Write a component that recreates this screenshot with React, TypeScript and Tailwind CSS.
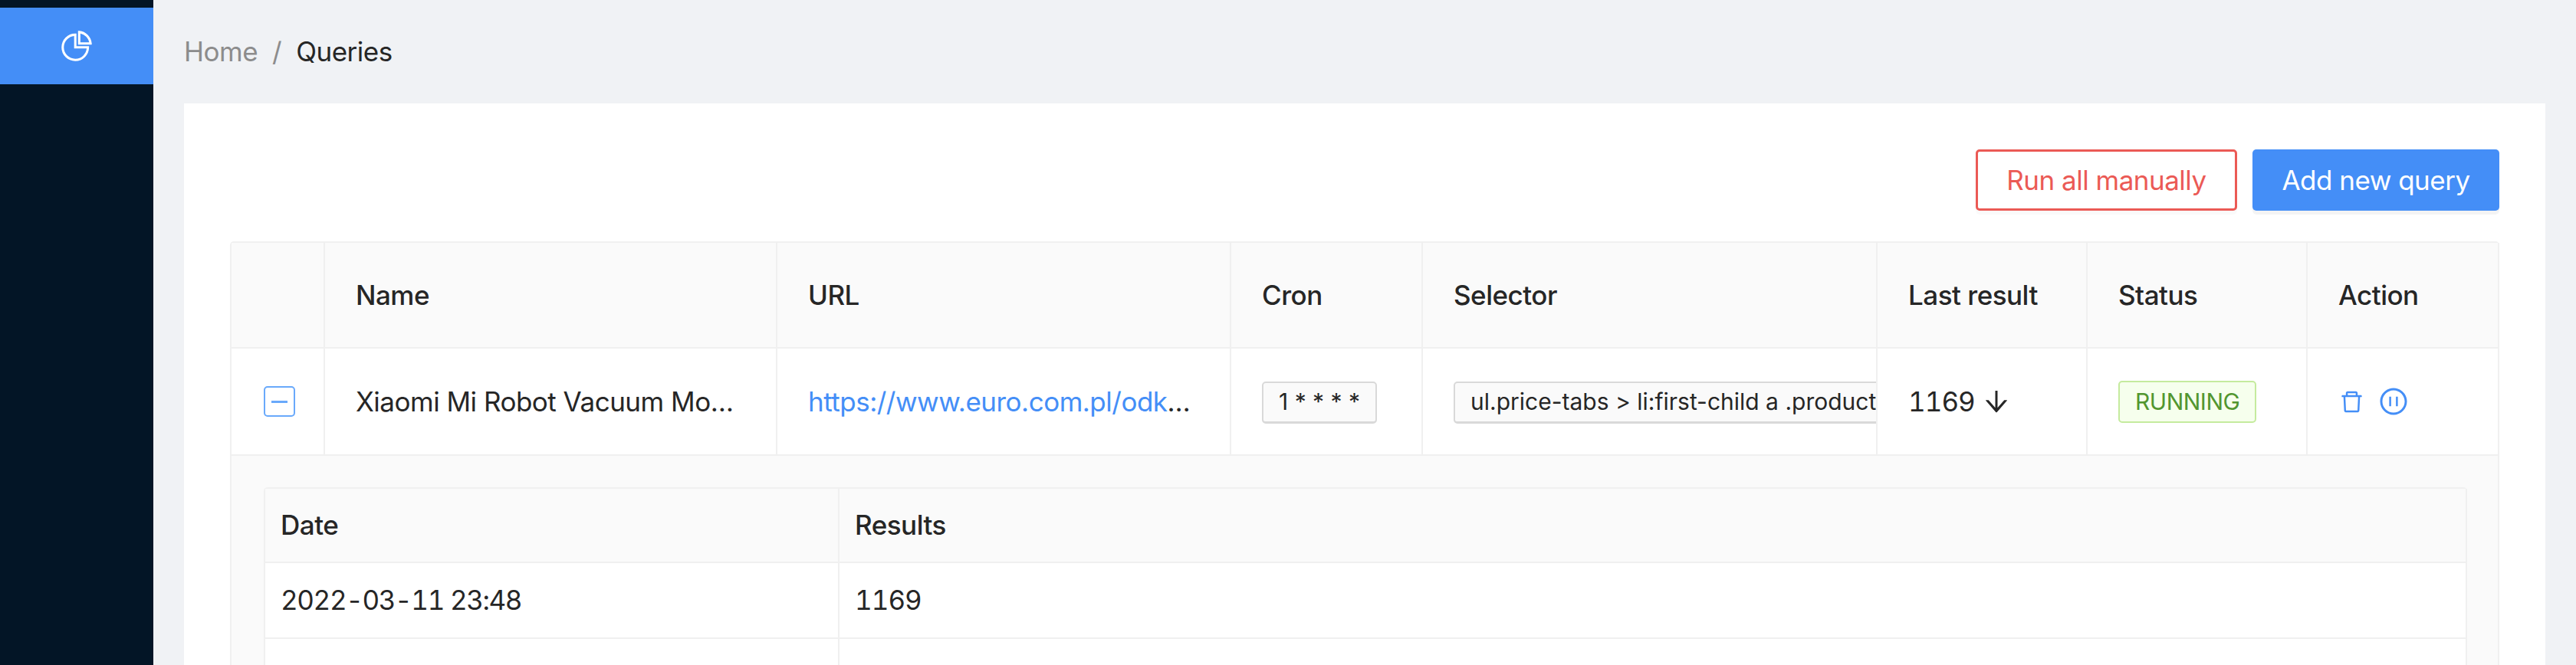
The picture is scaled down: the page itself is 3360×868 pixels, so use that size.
import { AiOutlineArrowDown, AiOutlineDelete, AiOutlinePauseCircle, AiOutlinePieChart } from 'react-icons/ai'

const headers = ['Name', 'URL', 'Cron', 'Selector', 'Last result', 'Status', 'Action']
const colWidths = ['w-[122px]', 'w-[590px]', 'w-[592px]', 'w-[250px]', 'w-[593px]', 'w-[274px]', 'w-[287px]', 'w-[250px]']

const cellBorder = 'border-r-2 border-b-2 border-[#f0f0f0]'

function Tag({ children }: { children: React.ReactNode }) {
  return (
    <span className="inline-block h-[55px] whitespace-nowrap rounded-[5px] border-2 border-b-[3px] border-[#d9d9d9] bg-[#fafafa] px-[20px] text-[30px] leading-[48px] tracking-normal">
      {children}
    </span>
  )
}

function Sidebar() {
  return (
    <aside className="w-[200px] shrink-0 bg-[#031526] pt-[10px]">
      <div className="flex h-[100px] items-center justify-center bg-[#448ef7] text-white">
        <AiOutlinePieChart size={46} />
      </div>
    </aside>
  )
}

function ResultsTable() {
  return (
    <div className="rounded-t-[5px] border-t-2 border-l-2 border-[#f0f0f0] bg-white">
      <table className="w-full table-fixed border-separate border-spacing-0 text-left">
        <colgroup>
          <col className="w-[749px]" />
          <col />
        </colgroup>
        <thead>
          <tr className="h-[97px] bg-[#fafafa]">
            <th className={`${cellBorder} px-[20px] font-medium`}>Date</th>
            <th className={`${cellBorder} px-[20px] font-medium`}>Results</th>
          </tr>
        </thead>
        <tbody>
          <tr className="h-[99px]">
            <td className={`${cellBorder} px-[20px] tracking-[-1.4px] tabular-nums`}>2022-03-11 23:48</td>
            <td className={`${cellBorder} px-[20px] tracking-[-1px] tabular-nums`}>1169</td>
          </tr>
          <tr className="h-[99px]">
            <td className={cellBorder} />
            <td className={cellBorder} />
          </tr>
        </tbody>
      </table>
    </div>
  )
}

function QueriesTable() {
  return (
    <div className="rounded-t-[5px] border-t-2 border-l-2 border-[#f0f0f0]">
      <table className="w-full table-fixed border-separate border-spacing-0 text-left">
        <colgroup>
          {colWidths.map((w, i) => (
            <col key={i} className={w} />
          ))}
        </colgroup>
        <thead>
          <tr className="h-[138px] bg-[#fafafa]">
            <th className={cellBorder} />
            {headers.map((h) => (
              <th key={h} className={`${cellBorder} px-[40px] font-medium`}>
                {h}
              </th>
            ))}
          </tr>
        </thead>
        <tbody>
          <tr className="h-[140px]">
            <td className={cellBorder}>
              <div className="ml-[42px] flex h-[40px] w-[41px] items-center justify-center rounded-[5px] border-2 border-[#69a9fb] bg-white">
                <span className="h-[3px] w-[21px] bg-[#69a9fb]" />
              </div>
            </td>
            <td className={`${cellBorder} truncate px-[40px]`}>Xiaomi Mi Robot Vacuum Mop Essential</td>
            <td className={`${cellBorder} truncate px-[40px] text-[#262626]`}>
              <span className="text-[#448ef7]">https://www.euro.com.pl/odkurzacze-automatyczne/xiaomi</span>
            </td>
            <td className={`${cellBorder} px-[40px]`}>
              <Tag>1 * * * *</Tag>
            </td>
            <td className={`${cellBorder} overflow-hidden pl-[40px]`}>
              <Tag>ul.price-tabs &gt; li:first-child a .product-price</Tag>
            </td>
            <td className={`${cellBorder} px-[40px]`}>
              <span className="flex items-center gap-[8px] tracking-[-1px] tabular-nums">
                1169
                <AiOutlineArrowDown size={40} />
              </span>
            </td>
            <td className={`${cellBorder} px-[40px]`}>
              <span className="inline-block h-[55px] rounded-[5px] border-2 border-[#c5eb9e] bg-[#f6ffed] px-[20px] text-[30px] leading-[50px] text-[#52962f]">
                RUNNING
              </span>
            </td>
            <td className={`${cellBorder} px-[40px]`}>
              <div className="flex items-center gap-[17px] text-[#448ef7]">
                <AiOutlineDelete size={35} />
                <AiOutlinePauseCircle size={40} />
              </div>
            </td>
          </tr>
          <tr>
            <td colSpan={8} className="border-r-2 border-[#f0f0f0] bg-[#fafafa] pt-[41px] pr-[40px] pl-[42px]">
              <ResultsTable />
            </td>
          </tr>
        </tbody>
      </table>
    </div>
  )
}

export default function App() {
  return (
    <div className="flex h-[868px] overflow-hidden bg-[#f0f2f5] font-['Inter',sans-serif] text-[35px] tracking-[-0.5px] text-[#262626]">
      <Sidebar />
      <main className="flex min-w-0 flex-1 flex-col overflow-hidden px-[40px]">
        <nav className="flex h-[135px] shrink-0 items-center">
          <span className="text-[#8c8c8c]">Home</span>
          <span className="mx-[19px] text-[#8c8c8c]">/</span>
          <span>Queries</span>
        </nav>
        <section className="flex-1 bg-white px-[60px] pt-[60px]">
          <div className="mb-[40px] flex justify-end gap-[20px]">
            <button className="h-[80px] w-[341px] rounded-[5px] border-[3px] border-[#eb5a55] bg-white text-[#eb5a55] shadow-[0_5px_0_rgba(0,0,0,0.02)]">
              Run all manually
            </button>
            <button className="h-[80px] w-[322px] rounded-[5px] bg-[#448ef7] text-white shadow-[0_5px_0_rgba(0,0,0,0.045)]">
              Add new query
            </button>
          </div>
          <QueriesTable />
        </section>
      </main>
    </div>
  )
}
